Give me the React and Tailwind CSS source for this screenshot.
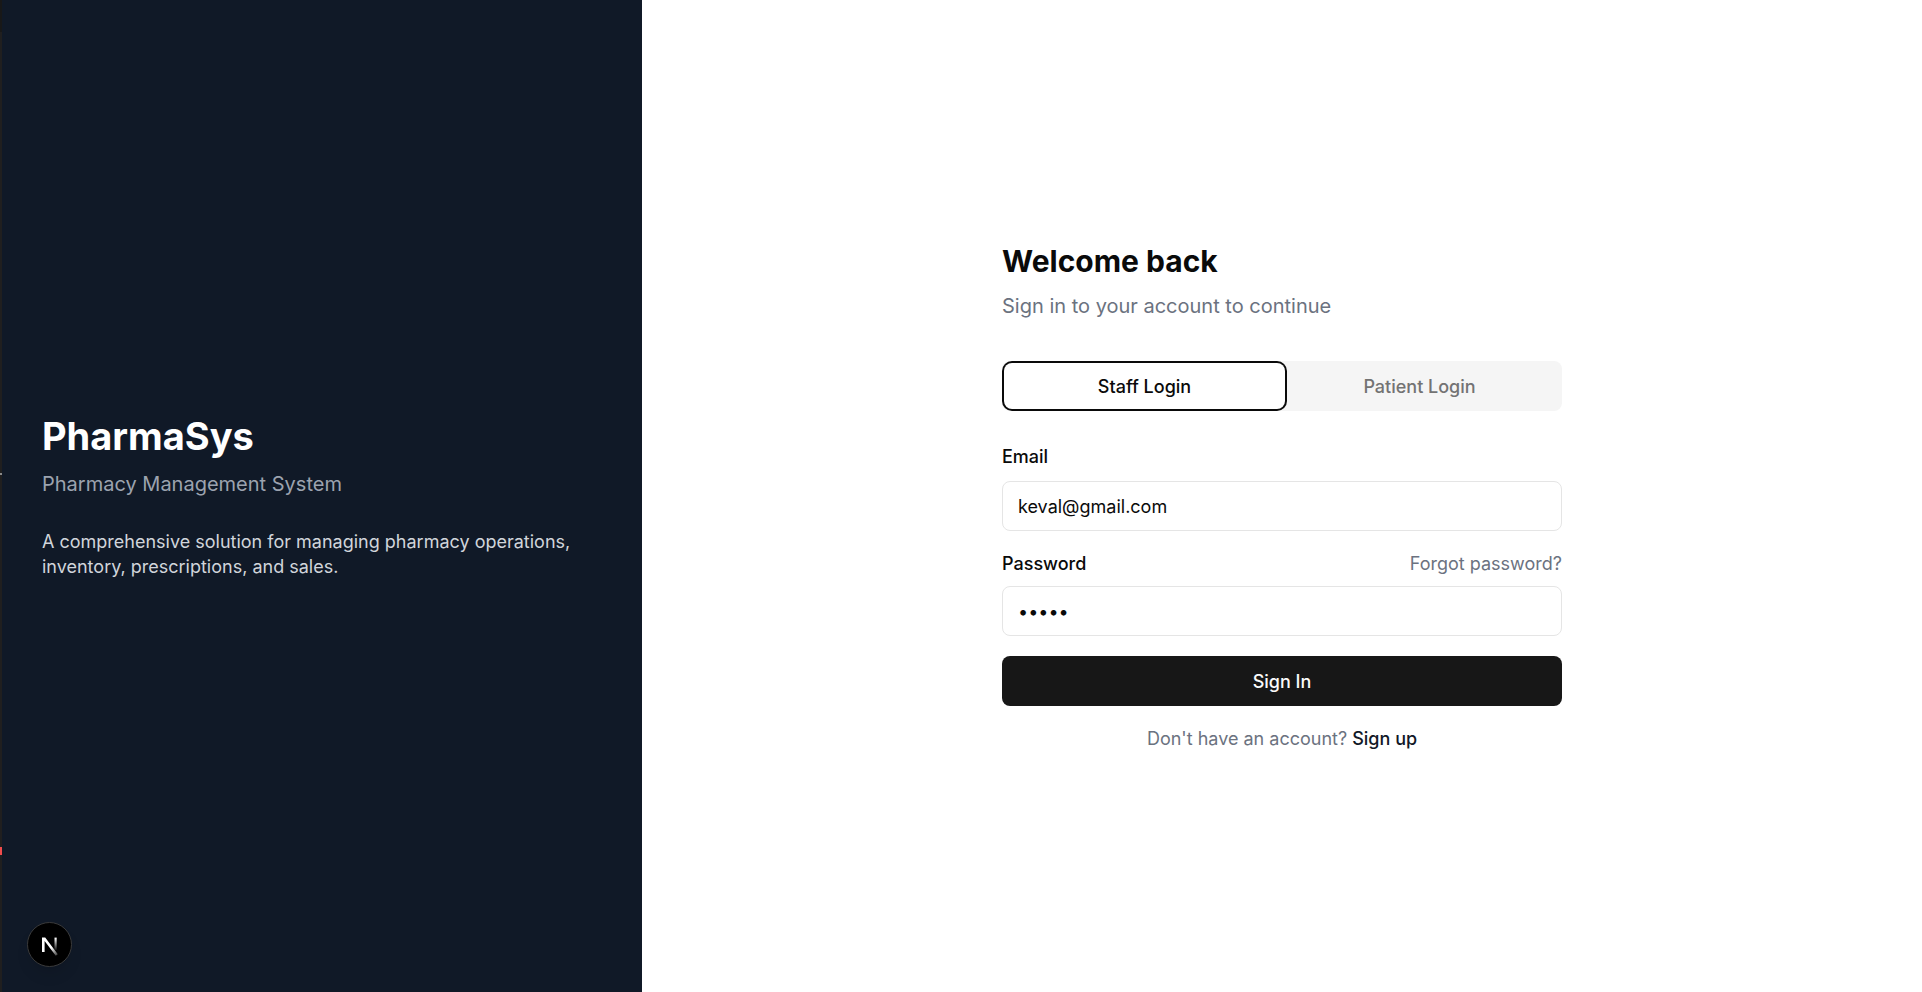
import React from "react";

function Brand() {
  return (
    <aside className="flex flex-col justify-center bg-[#101927] px-10">
      <h1 className="text-[38px] leading-[46px] font-bold text-white">PharmaSys</h1>
      <p className="mt-[10px] text-[20px] leading-[30px] text-[#9ca3af]">Pharmacy Management System</p>
      <p className="mt-[30px] text-[18px] leading-[25px] text-[#d1d5db]">
        A comprehensive solution for managing pharmacy operations, inventory, prescriptions, and sales.
      </p>
    </aside>
  );
}

function EdgeStrip() {
  return (
    <div className="flex w-[2px] shrink-0 flex-col bg-[#201f1f]" aria-hidden="true">
      <div className="h-8 bg-[#181818]" />
      <div className="h-[441px]" />
      <div className="h-[2px] bg-[#8a8a8a]" />
      <div className="h-[372px]" />
      <div className="h-2 bg-[#f14c4c]" />
    </div>
  );
}

function DevBadge() {
  return (
    <button
      type="button"
      aria-label="Open developer tools"
      className="fixed bottom-[25px] left-[27px] size-[45px] rounded-full border border-[#3a3a3a] bg-black shadow-lg"
    >
      <svg viewBox="0 0 45 45" className="absolute -inset-px size-[45px]" fill="none">
        <defs>
          <linearGradient id="diag" x1="24" y1="26" x2="31" y2="34" gradientUnits="userSpaceOnUse">
            <stop stopColor="#fff" />
            <stop offset="1" stopColor="#fff" stopOpacity="0.15" />
          </linearGradient>
          <linearGradient id="stem" x1="29" y1="16" x2="29" y2="29" gradientUnits="userSpaceOnUse">
            <stop stopColor="#fff" />
            <stop offset="1" stopColor="#fff" stopOpacity="0" />
          </linearGradient>
        </defs>
        <path d="M15 15.600H18.200L30.800 32.300L28.800 33.800L17.600 19V30H15Z" fill="url(#diag)" />
        <path d="M28.600 15.600V28" stroke="url(#stem)" strokeWidth="2.200" />
      </svg>
    </button>
  );
}

const field =
  "h-[50px] w-full rounded-lg border border-[#e5e5e5] bg-white px-[15px] text-[18px] text-[#0a0a0a] outline-none";

function LoginForm() {
  return (
    <main className="col-span-2 flex items-center justify-center bg-white">
      <div className="w-full max-w-[560px]">
        <h2 className="text-[30px] leading-[40px] font-bold text-[#0a0a0a]">Welcome back</h2>
        <p className="mt-[10px] text-[20px] leading-[30px] text-[#6b7280]">Sign in to your account to continue</p>

        <div
          role="tablist"
          className="mt-10 grid h-[50px] grid-cols-2 rounded-lg bg-[#f5f5f5] p-[5px] text-[18px] font-medium"
        >
          <button
            type="button"
            role="tab"
            aria-selected="true"
            className="rounded-[5px] bg-white text-[#0a0a0a] ring-2 ring-[#0a0a0a] ring-offset-[3px] ring-offset-white"
          >
            Staff Login
          </button>
          <button type="button" role="tab" aria-selected="false" className="text-[#737373]">
            Patient Login
          </button>
        </div>

        <form className="mt-[33px] flex flex-col" onSubmit={(e) => e.preventDefault()}>
          <label htmlFor="email" className="text-[18px] leading-[25px] font-medium text-[#0a0a0a]">
            Email
          </label>
          <input id="email" type="email" defaultValue="keval@gmail.com" className={`mt-3 ${field}`} />

          <div className="mt-5 flex justify-between text-[18px] leading-[25px]">
            <label htmlFor="password" className="font-medium text-[#0a0a0a]">
              Password
            </label>
            <a href="#forgot" className="text-[#6b7280]">
              Forgot password?
            </a>
          </div>
          <input id="password" type="password" defaultValue="keval" className={`mt-[10px] ${field}`} />

          <button
            type="submit"
            className="mt-5 h-[50px] w-full rounded-lg bg-[#171717] text-[18px] font-medium text-[#fafafa]"
          >
            Sign In
          </button>
        </form>

        <p className="mt-5 text-center text-[18px] leading-[25px] text-[#6b7280]">
          Don't have an account?{" "}
          <a href="#signup" className="font-medium text-[#111827]">
            Sign up
          </a>
        </p>
      </div>
    </main>
  );
}

export default function App() {
  return (
    <div className="flex min-h-screen font-['Inter',sans-serif]">
      <EdgeStrip />
      <div className="grid flex-1 grid-cols-3">
        <Brand />
        <LoginForm />
      </div>
      <DevBadge />
    </div>
  );
}
